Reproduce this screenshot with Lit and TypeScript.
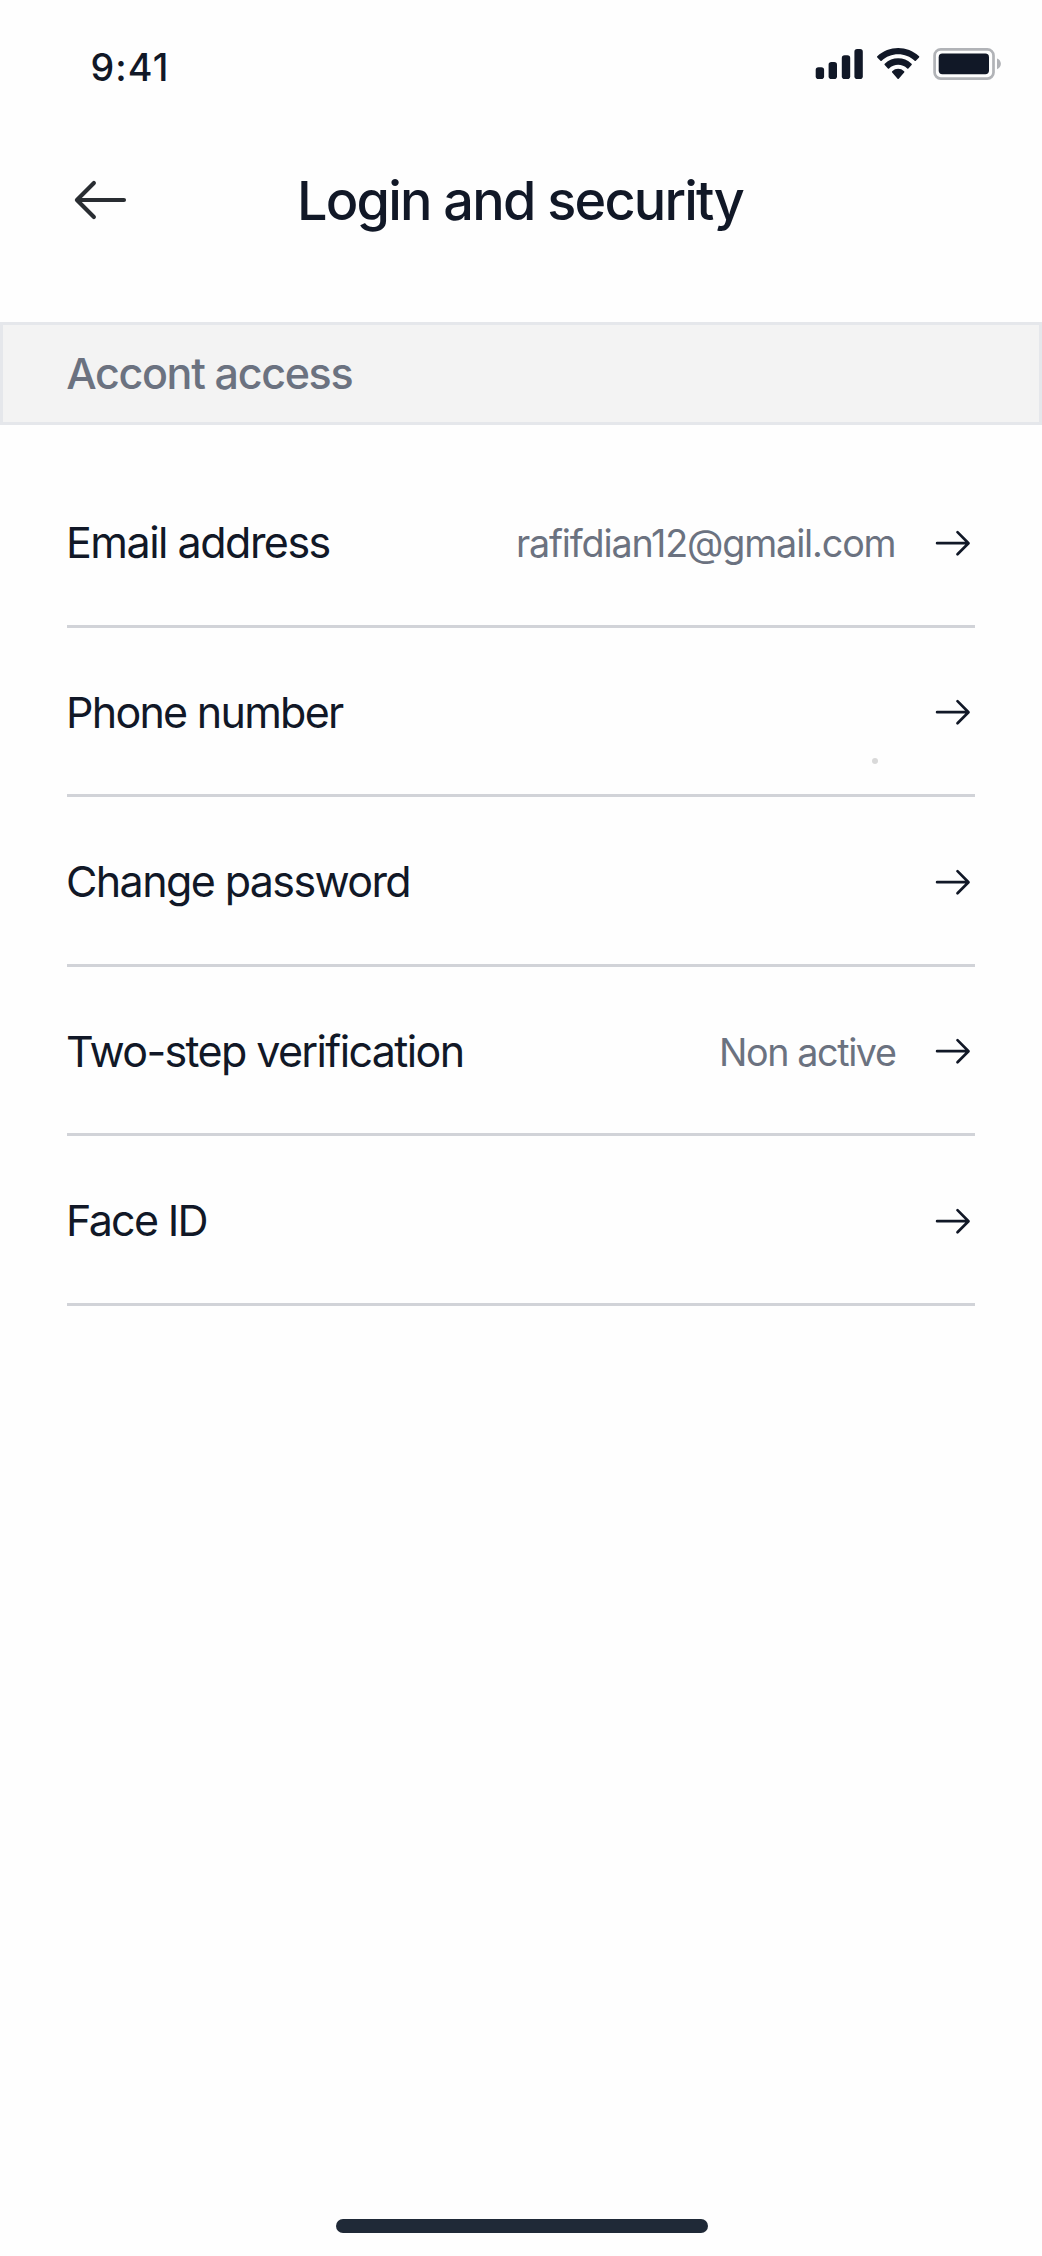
import { LitElement, html, css, svg, nothing } from "lit";
import { customElement } from "lit/decorators.js";
import { styleMap } from "lit/directives/style-map.js";

interface Setting {
  label: string;
  labelTracking: number;
  value?: string;
  valueTracking?: number;
  marker?: boolean;
}

const SETTINGS: Setting[] = [
  { label: "Email address", labelTracking: -1.5, value: "rafifdian12@gmail.com", valueTracking: -1.15 },
  { label: "Phone number", labelTracking: -1.74, marker: true },
  { label: "Change password", labelTracking: -1.61 },
  { label: "Two-step verification", labelTracking: -1.63, value: "Non active", valueTracking: -1.4 },
  { label: "Face ID", labelTracking: -1.7 },
];

@customElement("status-bar")
class StatusBar extends LitElement {
  static styles = css`
    :host {
      display: flex;
      justify-content: space-between;
      align-items: flex-start;
      height: 134px;
      padding: 0 40px 0 90.5px;
      box-sizing: border-box;
    }
    .time {
      font-size: 37.7px;
      font-weight: 500;
      line-height: 134px;
      letter-spacing: 1.1px;
      color: #111827;
    }
    .icons {
      display: block;
      width: 188px;
      height: 34px;
      margin-top: 47px;
    }
  `;

  render() {
    const bars = [
      [1.7, 20.3, 11.7],
      [14.6, 15, 17],
      [27.8, 8.3, 23.7],
      [40.4, 2, 30],
    ];
    return html`
      <span class="time">9:41</span>
      <svg class="icons" viewBox="0 0 188 34" aria-hidden="true">
        ${bars.map(([x, y, h]) => svg`<rect x=${x} y=${y} width="8.4" height=${h} rx="2.8" fill="#111827" />`)}
        <g transform="translate(63 1) scale(2.468 2.514)" fill="#111827">
          <path d="M8.5713 2.46628C11.0584 2.46639 13.4504 3.38847 15.2529 5.04195C15.3887 5.16962 15.6056 5.16801 15.7393 5.03834L17.0368 3.77487C17.1045 3.70911 17.1422 3.62004 17.1417 3.52735C17.1411 3.43467 17.1023 3.34603 17.0338 3.28104C12.3028 -1.09368 4.83907 -1.09368 0.108056 3.28104C0.0395 3.34598 0 3.4346 0 3.52728C0 3.61996 0.0370 3.70906 0.104689 3.77487L1.40255 5.03834C1.53615 5.16821 1.75327 5.16983 1.88893 5.04195C3.69167 3.38836 6.08395 2.46628 8.5713 2.46628Z" />
          <path d="M8.56795 6.68656C9.92527 6.68647 11.2341 7.19821 12.2403 8.12234C12.3763 8.25347 12.5907 8.25063 12.7234 8.11594L14.0106 6.79663C14.0784 6.72742 14.116 6.63355 14.115 6.536C14.114 6.43844 14.0746 6.34536 14.0054 6.27757C10.9416 3.38672 6.19688 3.38672 3.13305 6.27757C3.06384 6.34536 3.02435 6.43849 3.02345 6.53607C3.02254 6.63366 3.06028 6.7275 3.12822 6.79663L4.41513 8.11594C4.54778 8.25063 4.76215 8.25347 4.89823 8.12234C5.90368 7.19882 7.21152 6.68713 8.56795 6.68656Z" />
          <path d="M11.0924 9.48011C11.0943 9.58546 11.0572 9.68703 10.9899 9.76084L8.81327 12.2156C8.74946 12.2877 8.66247 12.3283 8.5717 12.3283C8.48093 12.3283 8.39394 12.2877 8.33013 12.2156L6.15314 9.76084C6.08585 9.68697 6.04884 9.58537 6.05086 9.48002C6.05288 9.37467 6.09375 9.27486 6.16382 9.20412C7.55386 7.87781 9.5895 7.87781 10.9795 9.20412C11.0496 9.27491 11.0904 9.37475 11.0924 9.48011Z" />
        </g>
        <rect x="120.6" y="2.3" width="58.9" height="29.3" rx="6.2" fill="none" stroke="#b1b3b7" stroke-width="2.7" />
        <rect x="124.7" y="6.6" width="50.3" height="20.6" rx="3.7" fill="#111827" />
        <path d="M183 11.4V22.2C185.4 21.3 186.9 19.3 186.9 16.8C186.9 14.3 185.4 12.3 183 11.4Z" fill="#b1b3b7" />
      </svg>
    `;
  }
}

@customElement("page-header")
class PageHeader extends LitElement {
  static styles = css`
    :host {
      display: grid;
      grid-template-columns: 66.7px 1fr 66.7px;
      align-items: center;
      height: 132px;
      padding: 0 67.7px 0 65.7px;
      box-sizing: border-box;
    }
    .back {
      display: block;
      width: 66.7px;
      height: 66px;
    }
    .title {
      margin: 0;
      padding-top: 1px;
      font-size: 54px;
      font-weight: 500;
      line-height: 66px;
      letter-spacing: -1.78px;
      text-align: center;
      white-space: nowrap;
      color: #111827;
    }
  `;

  render() {
    return html`
      <svg class="back" viewBox="0 0 66.7 66" fill="none" stroke="#292d32" stroke-width="4.1" stroke-linecap="round" stroke-linejoin="round" aria-label="Back">
        <path d="M27.9 16L10.9 33L27.9 50M58 33H11.4" />
      </svg>
      <h1 class="title">Login and security</h1>
    `;
  }
}

@customElement("setting-row")
class SettingRow extends LitElement {
  static properties = { setting: { attribute: false } };
  declare setting: Setting;

  static styles = css`
    :host {
      display: flex;
      align-items: center;
      position: relative;
      height: 169.45px;
      padding-top: 2px;
      box-sizing: border-box;
      border-bottom: 3px solid #d1d3d8;
    }
    .label {
      flex: 1;
      margin: 0 0 1px -1px;
      font-size: 43px;
      line-height: 60px;
      white-space: nowrap;
      color: #111827;
    }
    .value {
      margin: 1px 35.5px 0 0;
      font-size: 37.7px;
      line-height: 60px;
      white-space: nowrap;
      color: #6b7280;
    }
    .arrow {
      display: block;
      width: 44px;
      height: 44px;
    }
    .marker {
      position: absolute;
      right: 97px;
      bottom: 30.5px;
      width: 6px;
      height: 6px;
      border-radius: 50%;
      background: #d9d9d9;
    }
  `;

  render() {
    const s = this.setting;
    return html`
      <span class="label" style=${styleMap({ letterSpacing: `${s.labelTracking}px` })}>${s.label}</span>
      ${s.value
        ? html`<span class="value" style=${styleMap({ letterSpacing: `${s.valueTracking}px` })}>${s.value}</span>`
        : nothing}
      <svg class="arrow" viewBox="0 0 44 44" fill="none" stroke="#111827" stroke-width="2.7" stroke-linecap="round" stroke-linejoin="round" aria-hidden="true">
        <path d="M26.5 11.1L37.5 22.2L26.5 33.3M6.1 22.2H37" />
      </svg>
      ${s.marker ? html`<span class="marker"></span>` : nothing}
    `;
  }
}

@customElement("app-root")
class AppRoot extends LitElement {
  static styles = css`
    :host {
      display: flex;
      flex-direction: column;
      height: 2256px;
      background: #fefefe;
      font-family: Inter, "Liberation Sans", sans-serif;
    }
    .section {
      height: 103px;
      margin: 56px 0 33.6px;
      padding-left: 63.2px;
      box-sizing: border-box;
      border: 3px solid #e5e7eb;
      background: #f3f3f3;
      font-size: 43px;
      font-weight: 500;
      line-height: 97px;
      letter-spacing: -1.33px;
      color: #6b7280;
    }
    .list {
      padding: 0 67px;
    }
    .home {
      width: 372.3px;
      height: 14.2px;
      margin: auto auto 22.8px 336px;
      border-radius: 7.1px;
      background: #1f2937;
    }
  `;

  render() {
    return html`
      <status-bar></status-bar>
      <page-header></page-header>
      <div class="section">Accont access</div>
      <div class="list">
        ${SETTINGS.map((s) => html`<setting-row .setting=${s}></setting-row>`)}
      </div>
      <div class="home"></div>
    `;
  }
}
